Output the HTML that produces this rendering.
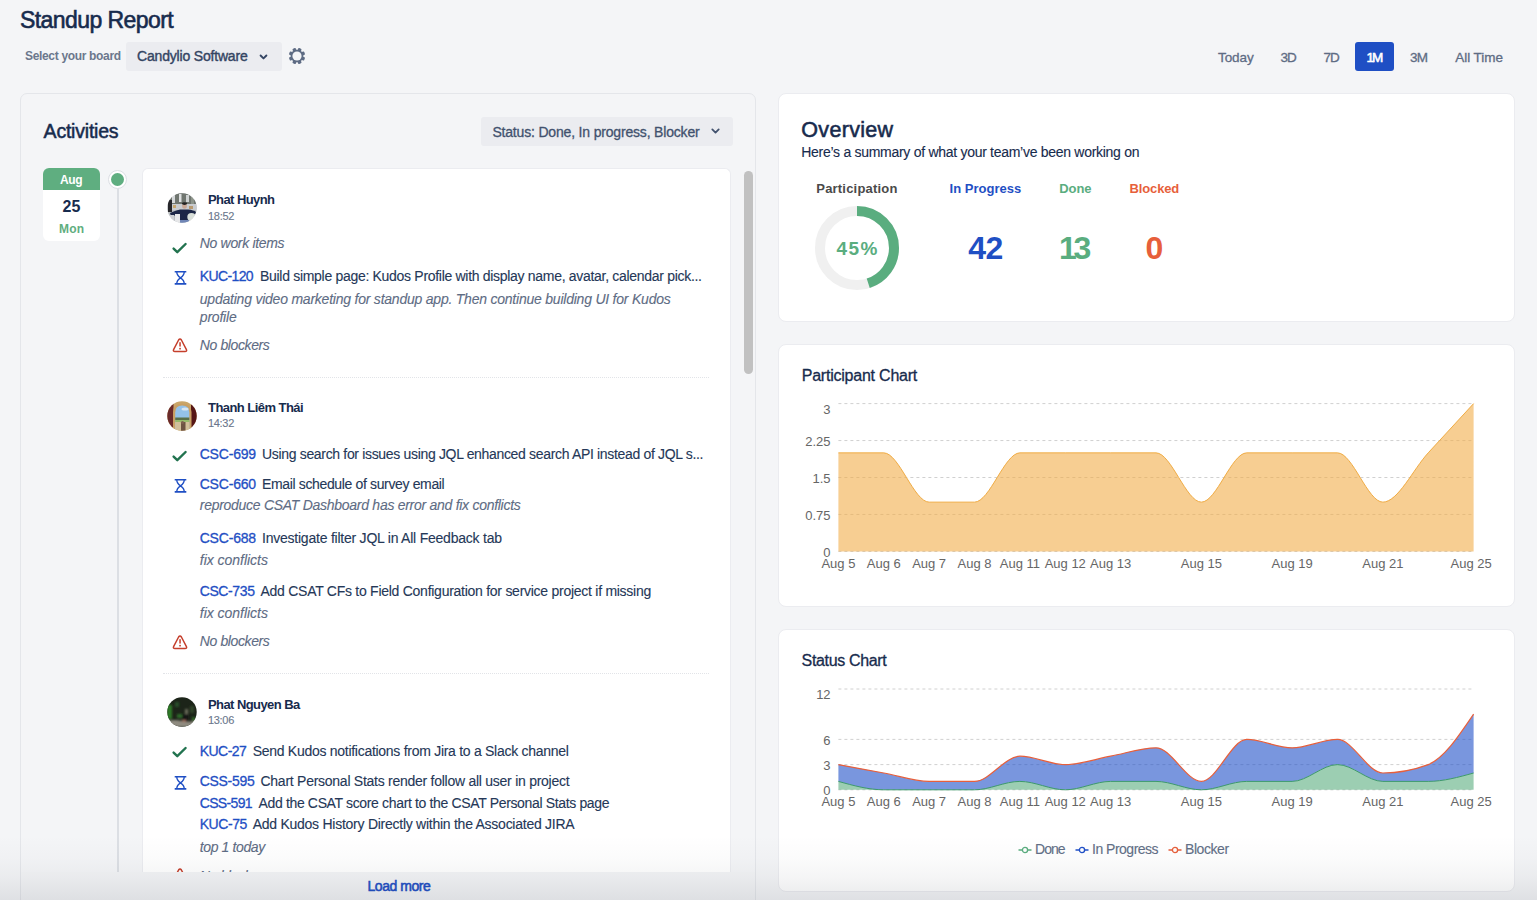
<!DOCTYPE html><html><head><meta charset="utf-8"><style>
*{box-sizing:border-box;margin:0;padding:0}
html,body{width:1537px;height:900px;overflow:hidden}
body{background:#f4f5f7;font-family:"Liberation Sans",sans-serif;color:#172b4d;position:relative}
.abs{position:absolute}
.t{position:absolute;line-height:1;white-space:nowrap}
.m{-webkit-text-stroke-width:0.3px}
.r{-webkit-text-stroke-width:0.12px}
.b{font-weight:700}
.it{font-style:italic;color:#5e6c84}
.lnk{color:#1f4fc4}
.ttl{color:#253858}
.sep{position:absolute;left:20px;width:546px;height:0;border-top:1px dotted #e2e4e8}
.av{position:absolute;width:30px;height:30px}
</style></head><body>
<div id="t0" class="t m" style="top:9.13px;font-size:23px;left:20.00px;letter-spacing:-0.570px;color:#172b4d;-webkit-text-stroke-width:0.6px">Standup Report</div>
<div id="t1" class="t b" style="top:50.34px;font-size:12px;left:25.00px;letter-spacing:-0.329px;color:#6b778c">Select your board</div>
<div class="abs" style="left:126px;top:42px;width:156px;height:29px;background:#ebecf0;border-radius:3px"></div>
<div id="t2" class="t m" style="top:49.35px;font-size:14px;left:137.00px;letter-spacing:-0.182px;color:#344563;-webkit-text-stroke-width:0.4px">Candylio Software</div>
<svg class="abs" style="left:258px;top:52px" width="11" height="10" viewBox="0 0 11 10"><path d="M2.6 3.5L5.5 6.4L8.4 3.5" fill="none" stroke="#344563" stroke-width="1.9" stroke-linecap="round" stroke-linejoin="round"/></svg>
<svg class="abs" style="left:286.7px;top:46.1px" width="20" height="20" viewBox="-10 -10 20 20"><g fill="#5e6c84"><rect x="-1.75" y="-8.2" width="3.5" height="4" rx="0.9" transform="rotate(22.5)"/><rect x="-1.75" y="-8.2" width="3.5" height="4" rx="0.9" transform="rotate(67.5)"/><rect x="-1.75" y="-8.2" width="3.5" height="4" rx="0.9" transform="rotate(112.5)"/><rect x="-1.75" y="-8.2" width="3.5" height="4" rx="0.9" transform="rotate(157.5)"/><rect x="-1.75" y="-8.2" width="3.5" height="4" rx="0.9" transform="rotate(202.5)"/><rect x="-1.75" y="-8.2" width="3.5" height="4" rx="0.9" transform="rotate(247.5)"/><rect x="-1.75" y="-8.2" width="3.5" height="4" rx="0.9" transform="rotate(292.5)"/><rect x="-1.75" y="-8.2" width="3.5" height="4" rx="0.9" transform="rotate(337.5)"/><circle r="6.3"/></g><circle r="4.6" fill="#f4f5f7"/></svg>
<div id="t3" class="t m" style="top:50.67px;font-size:13.5px;left:1218.00px;letter-spacing:-0.077px;color:#5e6c84">Today</div>
<div id="t4" class="t m" style="top:50.67px;font-size:13.5px;left:1280.50px;letter-spacing:-1.059px;color:#5e6c84">3D</div>
<div id="t5" class="t m" style="top:50.67px;font-size:13.5px;left:1323.60px;letter-spacing:-1.159px;color:#5e6c84">7D</div>
<div class="abs" style="left:1355px;top:42px;width:39px;height:29px;background:#1f4fc4;border-radius:3px"></div>
<div id="t6" class="t m" style="top:50.67px;font-size:13.5px;left:1366.60px;letter-spacing:-2.162px;color:#fff;-webkit-text-stroke-width:0.6px">1M</div>
<div id="t7" class="t m" style="top:50.67px;font-size:13.5px;left:1410.00px;letter-spacing:-0.763px;color:#5e6c84">3M</div>
<div id="t8" class="t m" style="top:50.67px;font-size:13.5px;left:1455.30px;letter-spacing:-0.058px;color:#5e6c84">All Time</div>
<div class="abs" style="left:20px;top:93px;width:736px;height:830px;background:#f4f5f7;border:1px solid #e4e6ea;border-radius:7px"></div>
<div id="t9" class="t m" style="top:121.79px;font-size:19.5px;left:43.60px;letter-spacing:-0.217px;color:#172b4d;-webkit-text-stroke-width:0.5px">Activities</div>
<div class="abs" style="left:481px;top:117px;width:252px;height:28.5px;background:#ebecf0;border-radius:3px"></div>
<div id="t10" class="t m" style="top:124.65px;font-size:14px;left:492.40px;letter-spacing:-0.179px;color:#42526e">Status: Done, In progress, Blocker</div>
<svg class="abs" style="left:709.5px;top:126px" width="11" height="10" viewBox="0 0 11 10"><path d="M2.3 3.4L5.5 6.6L8.7 3.4" fill="none" stroke="#42526e" stroke-width="1.8" stroke-linecap="round" stroke-linejoin="round"/></svg>
<div class="abs" style="left:43px;top:168px;width:57px;height:72.5px;background:#fff;border-radius:6px;overflow:hidden"><div style="height:22px;background:#5fae80"></div></div>
<div id="t11" class="t b" style="top:173.64px;font-size:12px;left:60.00px;letter-spacing:-0.325px;color:#fff">Aug</div>
<div id="t12" class="t b" style="top:199.46px;font-size:16px;left:62.50px;letter-spacing:-0.000px;color:#172b4d">25</div>
<div id="t13" class="t b" style="top:222.54px;font-size:12px;left:59.00px;letter-spacing:0.175px;color:#5fae80">Mon</div>
<div class="abs" style="left:116.6px;top:185px;width:2.2px;height:720px;background:#dcdfe4"></div>
<div class="abs" style="left:108.2px;top:169.6px;width:19px;height:19px;border-radius:50%;background:#fff;border:1.2px solid #dcdfe4"></div>
<div class="abs" style="left:111.2px;top:172.6px;width:13px;height:13px;border-radius:50%;background:#5fae80"></div>
<div class="abs" style="left:744px;top:171px;width:9px;height:203px;border-radius:5px;background:#c1c1c1"></div>
<div class="abs" style="left:142px;top:168px;width:589px;height:704px;background:#fff;border:1px solid #ebecf0;border-bottom:0;border-radius:6px 6px 0 0;overflow:hidden">
<svg class="av" style="left:24px;top:23.7px" width="30" height="30" viewBox="0 0 30 30"><defs><clipPath id="c1"><circle cx="15" cy="15" r="14.7"/></clipPath><filter id="f1" x="-20%" y="-20%" width="140%" height="140%"><feGaussianBlur stdDeviation="0.7"/></filter></defs><g clip-path="url(#c1)"><rect width="30" height="30" fill="#b9bdc0"/><g filter="url(#f1)"><rect x="0" y="0" width="30" height="12" fill="#6f7670"/><rect x="5" y="2" width="3" height="8" fill="#d5d8da"/><rect x="12" y="1" width="2.5" height="8" fill="#dfe1e2"/><rect x="19" y="2" width="3" height="7" fill="#cfd3d3"/><rect x="24" y="4" width="3" height="8" fill="#8d948a"/><rect x="0" y="11" width="30" height="6" fill="#c9ccd0"/><rect x="1" y="7" width="4" height="12" fill="#26262c"/><rect x="6" y="12" width="3" height="3" fill="#c8a870"/><rect x="22" y="13" width="4" height="3" fill="#b89a70"/><ellipse cx="17.5" cy="13" rx="2.4" ry="2.8" fill="#c9a896"/><ellipse cx="17.5" cy="10.6" rx="2.6" ry="1.4" fill="#222"/><path d="M3 20Q9 17 13 16.5L21 16.5Q27 17 29 19L28 22L22 21V30H11V22L4 23Z" fill="#1c2646"/><rect x="8" y="21" width="5" height="9" fill="#e6e7e9"/><ellipse cx="24.5" cy="24" rx="4.2" ry="4" fill="#d9dfd9"/><rect x="3" y="22" width="4" height="8" fill="#cfd1d4"/><rect x="13" y="27" width="9" height="3" fill="#6f86b6"/></g></g></svg>
<div id="t14" class="t b" style="top:24.30px;font-size:13px;left:65.00px;letter-spacing:-0.579px;color:#172b4d">Phat Huynh</div>
<div id="t15" class="t r" style="top:41.59px;font-size:11px;left:65.00px;letter-spacing:-0.288px;color:#6b778c">18:52</div>
<svg class="abs" style="left:28px;top:72.9px" width="17" height="13" viewBox="0 0 17 13"><path d="M2.6 6.6L6.3 10.2L14.6 2" fill="none" stroke="#22734f" stroke-width="2.4" stroke-linecap="round" stroke-linejoin="round"/></svg>
<div id="t16" class="t it r" style="top:66.85px;font-size:14px;left:56.80px;letter-spacing:-0.325px;">No work items</div>
<svg class="abs" style="left:30.5px;top:102.3px" width="13" height="14" viewBox="0 0 13 14"><path d="M0.7 0.8H12.3M0.7 12.9H12.3" stroke="#1f4fc4" stroke-width="1.6"/><path d="M2.8 0.8Q2.6 4.2 6.5 6.85Q2.6 9.5 2.8 12.9M10.2 0.8Q10.4 4.2 6.5 6.85Q10.4 9.5 10.2 12.9" fill="none" stroke="#1f4fc4" stroke-width="1.35"/></svg>
<div id="t17" class="t lnk m" style="top:99.95px;font-size:14px;left:56.70px;letter-spacing:-0.602px;">KUC-120</div>
<div id="t18" class="t ttl r" style="top:99.95px;font-size:14px;left:117.00px;letter-spacing:-0.301px;">Build simple page: Kudos Profile with display name, avatar, calendar pick...</div>
<div id="t19" class="t it r" style="top:122.75px;font-size:14px;left:56.80px;letter-spacing:-0.224px;">updating video marketing for standup app. Then continue building UI for Kudos</div>
<div id="t20" class="t it r" style="top:140.75px;font-size:14px;left:56.80px;letter-spacing:-0.202px;">profile</div>
<svg class="abs" style="left:29px;top:168.7px" width="16" height="15" viewBox="0 0 16 15"><path d="M6.6 2Q8 -0.2 9.4 2L14.3 11.4Q15.4 13.5 13 13.5H3Q0.6 13.5 1.7 11.4Z" fill="none" stroke="#c53f2c" stroke-width="1.5" stroke-linejoin="round"/><path d="M8.05 4.8V8.1" stroke="#c53f2c" stroke-width="1.5" stroke-linecap="round"/><circle cx="8.05" cy="10.7" r="0.9" fill="#c53f2c"/></svg>
<div id="t21" class="t it r" style="top:168.55px;font-size:14px;left:56.80px;letter-spacing:-0.391px;">No blockers</div>
<div class="sep" style="top:207.60000000000002px"></div>
<svg class="av" style="left:24px;top:231.5px" width="30" height="30" viewBox="0 0 30 30"><defs><clipPath id="c2"><circle cx="15" cy="15" r="14.7"/></clipPath><filter id="f2" x="-20%" y="-20%" width="140%" height="140%"><feGaussianBlur stdDeviation="0.6"/></filter></defs><g clip-path="url(#c2)"><rect width="30" height="30" fill="#c9a66a"/><g filter="url(#f2)"><rect x="0" y="0" width="6.5" height="30" fill="#6a2c2c"/><rect x="24" y="0" width="6" height="30" fill="#561616"/><path d="M6 30V11Q6 2.5 15.2 2.5Q24.5 2.5 24.5 11V30Z" fill="#c9a064"/><path d="M8.2 30V11.5Q8.2 4.6 15.2 4.6Q22.3 4.6 22.3 11.5V30Z" fill="#94c2ea"/><ellipse cx="18" cy="8" rx="3.5" ry="1.6" fill="#d8e6f2"/><rect x="8.2" y="16.5" width="14.1" height="2.5" fill="#5a7048"/><rect x="8.2" y="19" width="14.1" height="2.5" fill="#96bb6a"/><path d="M8.2 30V21H22.3V30Z" fill="#d2c09a"/><rect x="14" y="21" width="4.5" height="9" fill="#6e5242"/><circle cx="15.5" cy="21.5" r="1.6" fill="#7e6050"/></g></g></svg>
<div id="t22" class="t b" style="top:232.10px;font-size:13px;left:65.00px;letter-spacing:-0.551px;color:#172b4d">Thanh Liêm Thái</div>
<div id="t23" class="t r" style="top:249.39px;font-size:11px;left:65.00px;letter-spacing:-0.313px;color:#6b778c">14:32</div>
<svg class="abs" style="left:28px;top:280.7px" width="17" height="13" viewBox="0 0 17 13"><path d="M2.6 6.6L6.3 10.2L14.6 2" fill="none" stroke="#22734f" stroke-width="2.4" stroke-linecap="round" stroke-linejoin="round"/></svg>
<div id="t24" class="t lnk m" style="top:278.45px;font-size:14px;left:56.70px;letter-spacing:-0.186px;">CSC-699</div>
<div id="t25" class="t ttl r" style="top:278.45px;font-size:14px;left:119.00px;letter-spacing:-0.328px;">Using search for issues using JQL enhanced search API instead of JQL s...</div>
<svg class="abs" style="left:30.5px;top:310.1px" width="13" height="14" viewBox="0 0 13 14"><path d="M0.7 0.8H12.3M0.7 12.9H12.3" stroke="#1f4fc4" stroke-width="1.6"/><path d="M2.8 0.8Q2.6 4.2 6.5 6.85Q2.6 9.5 2.8 12.9M10.2 0.8Q10.4 4.2 6.5 6.85Q10.4 9.5 10.2 12.9" fill="none" stroke="#1f4fc4" stroke-width="1.35"/></svg>
<div id="t26" class="t lnk m" style="top:307.55px;font-size:14px;left:56.70px;letter-spacing:-0.186px;">CSC-660</div>
<div id="t27" class="t ttl r" style="top:307.55px;font-size:14px;left:119.00px;letter-spacing:-0.354px;">Email schedule of survey email</div>
<div id="t28" class="t it r" style="top:329.35px;font-size:14px;left:56.80px;letter-spacing:-0.277px;">reproduce CSAT Dashboard has error and fix conflicts</div>
<div id="t29" class="t lnk m" style="top:361.75px;font-size:14px;left:56.70px;letter-spacing:-0.186px;">CSC-688</div>
<div id="t30" class="t ttl r" style="top:361.75px;font-size:14px;left:119.00px;letter-spacing:-0.227px;">Investigate filter JQL in All Feedback tab</div>
<div id="t31" class="t it r" style="top:383.65px;font-size:14px;left:56.80px;letter-spacing:-0.030px;">fix conflicts</div>
<div id="t32" class="t lnk m" style="top:415.35px;font-size:14px;left:56.70px;letter-spacing:-0.386px;">CSC-735</div>
<div id="t33" class="t ttl r" style="top:415.35px;font-size:14px;left:117.50px;letter-spacing:-0.265px;">Add CSAT CFs to Field Configuration for service project if missing</div>
<div id="t34" class="t it r" style="top:437.35px;font-size:14px;left:56.80px;letter-spacing:-0.030px;">fix conflicts</div>
<svg class="abs" style="left:29px;top:465.5px" width="16" height="15" viewBox="0 0 16 15"><path d="M6.6 2Q8 -0.2 9.4 2L14.3 11.4Q15.4 13.5 13 13.5H3Q0.6 13.5 1.7 11.4Z" fill="none" stroke="#c53f2c" stroke-width="1.5" stroke-linejoin="round"/><path d="M8.05 4.8V8.1" stroke="#c53f2c" stroke-width="1.5" stroke-linecap="round"/><circle cx="8.05" cy="10.7" r="0.9" fill="#c53f2c"/></svg>
<div id="t35" class="t it r" style="top:465.25px;font-size:14px;left:56.80px;letter-spacing:-0.391px;">No blockers</div>
<div class="sep" style="top:503.6px"></div>
<svg class="av" style="left:24px;top:528.0px" width="30" height="30" viewBox="0 0 30 30"><defs><clipPath id="c3"><circle cx="15" cy="15" r="14.7"/></clipPath><filter id="f3" x="-20%" y="-20%" width="140%" height="140%"><feGaussianBlur stdDeviation="1.1"/></filter></defs><g clip-path="url(#c3)"><rect width="30" height="30" fill="#1c2419"/><g filter="url(#f3)"><rect x="0" y="8" width="5" height="14" fill="#2f7a28"/><rect x="8" y="5" width="4" height="5" fill="#27502a"/><rect x="10" y="17" width="6" height="4" fill="#2e6a2a"/><rect x="18" y="12" width="3" height="6" fill="#6a6d5c"/><rect x="23" y="9" width="4" height="7" fill="#30452c"/><rect x="25" y="20" width="3" height="4" fill="#2d6a28"/><path d="M0 24Q8 22 15 24Q22 25 30 24V30H0Z" fill="#8f8b80"/><rect x="15" y="17" width="6" height="8" fill="#161616"/><rect x="15" y="23" width="4" height="2" fill="#9a6a5a"/></g></g></svg>
<div id="t36" class="t b" style="top:528.60px;font-size:13px;left:65.00px;letter-spacing:-0.577px;color:#172b4d">Phat Nguyen Ba</div>
<div id="t37" class="t r" style="top:545.89px;font-size:11px;left:65.00px;letter-spacing:-0.313px;color:#6b778c">13:06</div>
<svg class="abs" style="left:28px;top:577.2px" width="17" height="13" viewBox="0 0 17 13"><path d="M2.6 6.6L6.3 10.2L14.6 2" fill="none" stroke="#22734f" stroke-width="2.4" stroke-linecap="round" stroke-linejoin="round"/></svg>
<div id="t38" class="t lnk m" style="top:574.55px;font-size:14px;left:56.70px;letter-spacing:-0.521px;">KUC-27</div>
<div id="t39" class="t ttl r" style="top:574.55px;font-size:14px;left:109.70px;letter-spacing:-0.280px;">Send Kudos notifications from Jira to a Slack channel</div>
<svg class="abs" style="left:30.5px;top:606.5px" width="13" height="14" viewBox="0 0 13 14"><path d="M0.7 0.8H12.3M0.7 12.9H12.3" stroke="#1f4fc4" stroke-width="1.6"/><path d="M2.8 0.8Q2.6 4.2 6.5 6.85Q2.6 9.5 2.8 12.9M10.2 0.8Q10.4 4.2 6.5 6.85Q10.4 9.5 10.2 12.9" fill="none" stroke="#1f4fc4" stroke-width="1.35"/></svg>
<div id="t40" class="t lnk m" style="top:604.55px;font-size:14px;left:56.70px;letter-spacing:-0.301px;">CSS-595</div>
<div id="t41" class="t ttl r" style="top:604.55px;font-size:14px;left:117.50px;letter-spacing:-0.261px;">Chart Personal Stats render follow all user in project</div>
<div id="t42" class="t lnk m" style="top:626.55px;font-size:14px;left:56.70px;letter-spacing:-0.651px;">CSS-591</div>
<div id="t43" class="t ttl r" style="top:626.55px;font-size:14px;left:115.50px;letter-spacing:-0.348px;">Add the CSAT score chart to the CSAT Personal Stats page</div>
<div id="t44" class="t lnk m" style="top:648.45px;font-size:14px;left:56.70px;letter-spacing:-0.441px;">KUC-75</div>
<div id="t45" class="t ttl r" style="top:648.45px;font-size:14px;left:109.70px;letter-spacing:-0.258px;">Add Kudos History Directly within the Associated JIRA</div>
<div id="t46" class="t it r" style="top:670.95px;font-size:14px;left:56.80px;letter-spacing:-0.386px;">top 1 today</div>
<svg class="abs" style="left:29px;top:699.4px" width="16" height="15" viewBox="0 0 16 15"><path d="M6.6 2Q8 -0.2 9.4 2L14.3 11.4Q15.4 13.5 13 13.5H3Q0.6 13.5 1.7 11.4Z" fill="none" stroke="#c53f2c" stroke-width="1.5" stroke-linejoin="round"/><path d="M8.05 4.8V8.1" stroke="#c53f2c" stroke-width="1.5" stroke-linecap="round"/><circle cx="8.05" cy="10.7" r="0.9" fill="#c53f2c"/></svg>
<div id="t47" class="t it r" style="top:700.15px;font-size:14px;left:56.80px;letter-spacing:-0.391px;">No blockers</div>
</div>
<div class="abs" style="left:21px;top:871.5px;width:734px;height:40px;background:#f3f4f6"></div>
<div id="t48" class="t m" style="top:879.45px;font-size:14px;left:367.50px;letter-spacing:-0.470px;color:#1f4fc4;-webkit-text-stroke-width:0.55px">Load more</div>
<div class="abs" style="left:778px;top:93px;width:737px;height:229px;background:#fff;border:1px solid #ebecf0;border-radius:8px"></div>
<div id="t49" class="t m" style="top:119.50px;font-size:21.5px;left:801.30px;letter-spacing:0.320px;color:#172b4d;-webkit-text-stroke-width:0.55px">Overview</div>
<div id="t50" class="t r" style="top:144.95px;font-size:14px;left:801.30px;letter-spacing:-0.285px;color:#172b4d">Here’s a summary of what your team’ve been working on</div>
<div id="t51" class="t b" style="top:182.40px;font-size:13px;left:816.30px;letter-spacing:0.195px;color:#4a4a4a">Participation</div>
<div id="t52" class="t b" style="top:182.40px;font-size:13px;left:949.50px;letter-spacing:0.019px;color:#1f4fc4">In Progress</div>
<div id="t53" class="t b" style="top:182.40px;font-size:13px;left:1059.30px;letter-spacing:-0.100px;color:#5aad7f">Done</div>
<div id="t54" class="t b" style="top:182.40px;font-size:13px;left:1129.50px;letter-spacing:-0.126px;color:#e75f3b">Blocked</div>
<svg class="abs" style="left:806.8px;top:197.8px" width="100" height="100" viewBox="0 0 100 100"><circle cx="50" cy="50" r="37" fill="none" stroke="#f0f0f0" stroke-width="10"/><circle cx="50" cy="50" r="37" fill="none" stroke="#5aad7f" stroke-width="10" stroke-dasharray="104.62 232.48" transform="rotate(-90 50 50)"/></svg>
<div id="t55" class="t b" style="top:238.72px;font-size:19px;left:836.50px;letter-spacing:1.423px;color:#5aad7f">45%</div>
<div id="t56" class="t b" style="top:232.41px;font-size:32px;left:968.20px;letter-spacing:-0.500px;color:#1f4fc4">42</div>
<div id="t57" class="t b" style="top:232.41px;font-size:32px;left:1059.00px;letter-spacing:-3.400px;color:#5aad7f">13</div>
<div id="t58" class="t b" style="top:232.41px;font-size:32px;left:1145.50px;letter-spacing:0.000px;color:#e75f3b">0</div>
<div class="abs" style="left:778px;top:344px;width:737px;height:263px;background:#fff;border:1px solid #ebecf0;border-radius:8px"></div>
<div class="abs" style="left:778px;top:629px;width:737px;height:263px;background:#fff;border:1px solid #ebecf0;border-radius:8px"></div>
<div id="t59" class="t m" style="top:368.36px;font-size:16px;left:801.70px;letter-spacing:-0.222px;color:#172b4d">Participant Chart</div>
<div id="t60" class="t m" style="top:653.06px;font-size:16px;left:801.60px;letter-spacing:-0.351px;color:#172b4d">Status Chart</div>
<svg class="abs" style="left:0;top:0" width="1537" height="900"><line x1="838.4" x2="1473.6" y1="551.4" y2="551.4" stroke="#d0d0d0" stroke-dasharray="3 3"/><line x1="838.4" x2="1473.6" y1="514.45" y2="514.45" stroke="#d0d0d0" stroke-dasharray="3 3"/><line x1="838.4" x2="1473.6" y1="477.5" y2="477.5" stroke="#d0d0d0" stroke-dasharray="3 3"/><line x1="838.4" x2="1473.6" y1="440.55" y2="440.55" stroke="#d0d0d0" stroke-dasharray="3 3"/><line x1="838.4" x2="1473.6" y1="403.6" y2="403.6" stroke="#d0d0d0" stroke-dasharray="3 3"/><path d="M838.40,452.87C853.52,452.87,868.65,452.87,883.77,452.87C898.90,452.87,914.02,502.13,929.14,502.13C944.27,502.13,959.39,502.13,974.51,502.13C989.64,502.13,1004.76,452.87,1019.89,452.87C1035.01,452.87,1050.13,452.87,1065.26,452.87C1080.38,452.87,1095.50,452.87,1110.63,452.87C1125.75,452.87,1140.88,452.87,1156.00,452.87C1171.12,452.87,1186.25,502.13,1201.37,502.13C1216.50,502.13,1231.62,452.87,1246.74,452.87C1261.87,452.87,1276.99,452.87,1292.11,452.87C1307.24,452.87,1322.36,452.87,1337.49,452.87C1352.61,452.87,1367.73,502.13,1382.86,502.13C1397.98,502.13,1413.10,469.29,1428.23,452.87C1443.35,436.44,1458.48,420.02,1473.60,403.60L1473.60,551.40L838.40,551.40Z" fill="#f2ad4a" fill-opacity="0.6"/><path d="M838.40,452.87C853.52,452.87,868.65,452.87,883.77,452.87C898.90,452.87,914.02,502.13,929.14,502.13C944.27,502.13,959.39,502.13,974.51,502.13C989.64,502.13,1004.76,452.87,1019.89,452.87C1035.01,452.87,1050.13,452.87,1065.26,452.87C1080.38,452.87,1095.50,452.87,1110.63,452.87C1125.75,452.87,1140.88,452.87,1156.00,452.87C1171.12,452.87,1186.25,502.13,1201.37,502.13C1216.50,502.13,1231.62,452.87,1246.74,452.87C1261.87,452.87,1276.99,452.87,1292.11,452.87C1307.24,452.87,1322.36,452.87,1337.49,452.87C1352.61,452.87,1367.73,502.13,1382.86,502.13C1397.98,502.13,1413.10,469.29,1428.23,452.87C1443.35,436.44,1458.48,420.02,1473.60,403.60" fill="none" stroke="#f0ac45" stroke-width="1"/><line x1="838.4" x2="1473.6" y1="789.8" y2="789.8" stroke="#d0d0d0" stroke-dasharray="3 3"/><line x1="838.4" x2="1473.6" y1="764.6" y2="764.6" stroke="#d0d0d0" stroke-dasharray="3 3"/><line x1="838.4" x2="1473.6" y1="739.4" y2="739.4" stroke="#d0d0d0" stroke-dasharray="3 3"/><line x1="838.4" x2="1473.6" y1="689.0" y2="689.0" stroke="#d0d0d0" stroke-dasharray="3 3"/><path d="M838.40,781.40C853.52,785.60,868.65,789.80,883.77,789.80C898.90,789.80,914.02,789.80,929.14,789.80C944.27,789.80,959.39,789.80,974.51,789.80C989.64,789.80,1004.76,781.40,1019.89,781.40C1035.01,781.40,1050.13,789.80,1065.26,789.80C1080.38,789.80,1095.50,781.40,1110.63,781.40C1125.75,781.40,1140.88,781.40,1156.00,781.40C1171.12,781.40,1186.25,789.80,1201.37,789.80C1216.50,789.80,1231.62,781.40,1246.74,781.40C1261.87,781.40,1276.99,781.40,1292.11,781.40C1307.24,781.40,1322.36,764.60,1337.49,764.60C1352.61,764.60,1367.73,781.40,1382.86,781.40C1397.98,781.40,1413.10,781.40,1428.23,781.40C1443.35,781.40,1458.48,777.20,1473.60,773.00L1473.60,789.80L838.40,789.80Z" fill="#5aad7f" fill-opacity="0.6"/><path d="M838.40,764.60C853.52,767.40,868.65,770.20,883.77,773.00C898.90,775.80,914.02,781.40,929.14,781.40C944.27,781.40,959.39,781.40,974.51,781.40C989.64,781.40,1004.76,756.20,1019.89,756.20C1035.01,756.20,1050.13,764.60,1065.26,764.60C1080.38,764.60,1095.50,759.00,1110.63,756.20C1125.75,753.40,1140.88,747.80,1156.00,747.80C1171.12,747.80,1186.25,781.40,1201.37,781.40C1216.50,781.40,1231.62,739.40,1246.74,739.40C1261.87,739.40,1276.99,747.80,1292.11,747.80C1307.24,747.80,1322.36,739.40,1337.49,739.40C1352.61,739.40,1367.73,773.00,1382.86,773.00C1397.98,773.00,1413.10,770.20,1428.23,764.60C1443.35,759.00,1458.48,736.60,1473.60,714.20L1473.60,773.00C1458.48,777.20,1443.35,781.40,1428.23,781.40C1413.10,781.40,1397.98,781.40,1382.86,781.40C1367.73,781.40,1352.61,764.60,1337.49,764.60C1322.36,764.60,1307.24,781.40,1292.11,781.40C1276.99,781.40,1261.87,781.40,1246.74,781.40C1231.62,781.40,1216.50,789.80,1201.37,789.80C1186.25,789.80,1171.12,781.40,1156.00,781.40C1140.88,781.40,1125.75,781.40,1110.63,781.40C1095.50,781.40,1080.38,789.80,1065.26,789.80C1050.13,789.80,1035.01,781.40,1019.89,781.40C1004.76,781.40,989.64,789.80,974.51,789.80C959.39,789.80,944.27,789.80,929.14,789.80C914.02,789.80,898.90,789.80,883.77,789.80C868.65,789.80,853.52,785.60,838.40,781.40Z" fill="#2050c8" fill-opacity="0.6"/><path d="M838.40,781.40C853.52,785.60,868.65,789.80,883.77,789.80C898.90,789.80,914.02,789.80,929.14,789.80C944.27,789.80,959.39,789.80,974.51,789.80C989.64,789.80,1004.76,781.40,1019.89,781.40C1035.01,781.40,1050.13,789.80,1065.26,789.80C1080.38,789.80,1095.50,781.40,1110.63,781.40C1125.75,781.40,1140.88,781.40,1156.00,781.40C1171.12,781.40,1186.25,789.80,1201.37,789.80C1216.50,789.80,1231.62,781.40,1246.74,781.40C1261.87,781.40,1276.99,781.40,1292.11,781.40C1307.24,781.40,1322.36,764.60,1337.49,764.60C1352.61,764.60,1367.73,781.40,1382.86,781.40C1397.98,781.40,1413.10,781.40,1428.23,781.40C1443.35,781.40,1458.48,777.20,1473.60,773.00" fill="none" stroke="#3d9a6a" stroke-width="1"/><path d="M838.40,764.60C853.52,767.40,868.65,770.20,883.77,773.00C898.90,775.80,914.02,781.40,929.14,781.40C944.27,781.40,959.39,781.40,974.51,781.40C989.64,781.40,1004.76,756.20,1019.89,756.20C1035.01,756.20,1050.13,764.60,1065.26,764.60C1080.38,764.60,1095.50,759.00,1110.63,756.20C1125.75,753.40,1140.88,747.80,1156.00,747.80C1171.12,747.80,1186.25,781.40,1201.37,781.40C1216.50,781.40,1231.62,739.40,1246.74,739.40C1261.87,739.40,1276.99,747.80,1292.11,747.80C1307.24,747.80,1322.36,739.40,1337.49,739.40C1352.61,739.40,1367.73,773.00,1382.86,773.00C1397.98,773.00,1413.10,770.20,1428.23,764.60C1443.35,759.00,1458.48,736.60,1473.60,714.20" fill="none" stroke="#e75f3b" stroke-width="1.2"/></svg>
<div id="t61" class="t" style="top:545.50px;font-size:13px;left:530.60px;width:300px;text-align:right;color:#666">0</div>
<div id="t62" class="t" style="top:508.55px;font-size:13px;left:530.60px;width:300px;text-align:right;color:#666">0.75</div>
<div id="t63" class="t" style="top:471.60px;font-size:13px;left:530.60px;width:300px;text-align:right;color:#666">1.5</div>
<div id="t64" class="t" style="top:434.65px;font-size:13px;left:530.60px;width:300px;text-align:right;color:#666">2.25</div>
<div id="t65" class="t" style="top:402.90px;font-size:13px;left:530.60px;width:300px;text-align:right;color:#666">3</div>
<div id="t66" class="t" style="top:783.90px;font-size:13px;left:530.60px;width:300px;text-align:right;color:#666">0</div>
<div id="t67" class="t" style="top:758.70px;font-size:13px;left:530.60px;width:300px;text-align:right;color:#666">3</div>
<div id="t68" class="t" style="top:733.50px;font-size:13px;left:530.60px;width:300px;text-align:right;color:#666">6</div>
<div id="t69" class="t" style="top:688.10px;font-size:13px;left:530.60px;width:300px;text-align:right;color:#666">12</div>
<div id="t70" class="t" style="top:556.80px;font-size:13px;left:538.40px;width:600px;text-align:center;color:#666">Aug 5</div>
<div id="t71" class="t" style="top:795.20px;font-size:13px;left:538.40px;width:600px;text-align:center;color:#666">Aug 5</div>
<div id="t72" class="t" style="top:556.80px;font-size:13px;left:583.77px;width:600px;text-align:center;color:#666">Aug 6</div>
<div id="t73" class="t" style="top:795.20px;font-size:13px;left:583.77px;width:600px;text-align:center;color:#666">Aug 6</div>
<div id="t74" class="t" style="top:556.80px;font-size:13px;left:629.14px;width:600px;text-align:center;color:#666">Aug 7</div>
<div id="t75" class="t" style="top:795.20px;font-size:13px;left:629.14px;width:600px;text-align:center;color:#666">Aug 7</div>
<div id="t76" class="t" style="top:556.80px;font-size:13px;left:674.51px;width:600px;text-align:center;color:#666">Aug 8</div>
<div id="t77" class="t" style="top:795.20px;font-size:13px;left:674.51px;width:600px;text-align:center;color:#666">Aug 8</div>
<div id="t78" class="t" style="top:556.80px;font-size:13px;left:719.89px;width:600px;text-align:center;color:#666">Aug 11</div>
<div id="t79" class="t" style="top:795.20px;font-size:13px;left:719.89px;width:600px;text-align:center;color:#666">Aug 11</div>
<div id="t80" class="t" style="top:556.80px;font-size:13px;left:765.26px;width:600px;text-align:center;color:#666">Aug 12</div>
<div id="t81" class="t" style="top:795.20px;font-size:13px;left:765.26px;width:600px;text-align:center;color:#666">Aug 12</div>
<div id="t82" class="t" style="top:556.80px;font-size:13px;left:810.63px;width:600px;text-align:center;color:#666">Aug 13</div>
<div id="t83" class="t" style="top:795.20px;font-size:13px;left:810.63px;width:600px;text-align:center;color:#666">Aug 13</div>
<div id="t84" class="t" style="top:556.80px;font-size:13px;left:901.37px;width:600px;text-align:center;color:#666">Aug 15</div>
<div id="t85" class="t" style="top:795.20px;font-size:13px;left:901.37px;width:600px;text-align:center;color:#666">Aug 15</div>
<div id="t86" class="t" style="top:556.80px;font-size:13px;left:992.11px;width:600px;text-align:center;color:#666">Aug 19</div>
<div id="t87" class="t" style="top:795.20px;font-size:13px;left:992.11px;width:600px;text-align:center;color:#666">Aug 19</div>
<div id="t88" class="t" style="top:556.80px;font-size:13px;left:1082.86px;width:600px;text-align:center;color:#666">Aug 21</div>
<div id="t89" class="t" style="top:795.20px;font-size:13px;left:1082.86px;width:600px;text-align:center;color:#666">Aug 21</div>
<div id="t90" class="t" style="top:556.80px;font-size:13px;left:1171.10px;width:600px;text-align:center;color:#666">Aug 25</div>
<div id="t91" class="t" style="top:795.20px;font-size:13px;left:1171.10px;width:600px;text-align:center;color:#666">Aug 25</div>
<svg class="abs" style="left:1017.5px;top:843.8px" width="14" height="12" viewBox="0 0 14 12"><path d="M0.5 6H4.4M9.6 6H13.5" stroke="#5aad7f" stroke-width="1.3"/><circle cx="7" cy="6" r="2.6" fill="#fff" stroke="#5aad7f" stroke-width="1.3"/></svg>
<div id="t92" class="t r" style="top:841.75px;font-size:14px;left:1035.00px;letter-spacing:-0.984px;color:#626f86">Done</div>
<svg class="abs" style="left:1075px;top:843.8px" width="14" height="12" viewBox="0 0 14 12"><path d="M0.5 6H4.4M9.6 6H13.5" stroke="#2050c8" stroke-width="1.3"/><circle cx="7" cy="6" r="2.6" fill="#fff" stroke="#2050c8" stroke-width="1.3"/></svg>
<div id="t93" class="t r" style="top:841.75px;font-size:14px;left:1092.00px;letter-spacing:-0.501px;color:#626f86">In Progress</div>
<svg class="abs" style="left:1168px;top:843.8px" width="14" height="12" viewBox="0 0 14 12"><path d="M0.5 6H4.4M9.6 6H13.5" stroke="#e75f3b" stroke-width="1.3"/><circle cx="7" cy="6" r="2.6" fill="#fff" stroke="#e75f3b" stroke-width="1.3"/></svg>
<div id="t94" class="t r" style="top:841.75px;font-size:14px;left:1185.00px;letter-spacing:-0.434px;color:#626f86">Blocker</div>
<div class="abs" style="left:0;top:835px;width:1537px;height:65px;background:linear-gradient(to bottom,rgba(20,25,40,0) 0%,rgba(20,25,40,0.015) 35%,rgba(20,25,40,0.045) 65%,rgba(20,25,40,0.095) 100%)"></div>
</body></html>
